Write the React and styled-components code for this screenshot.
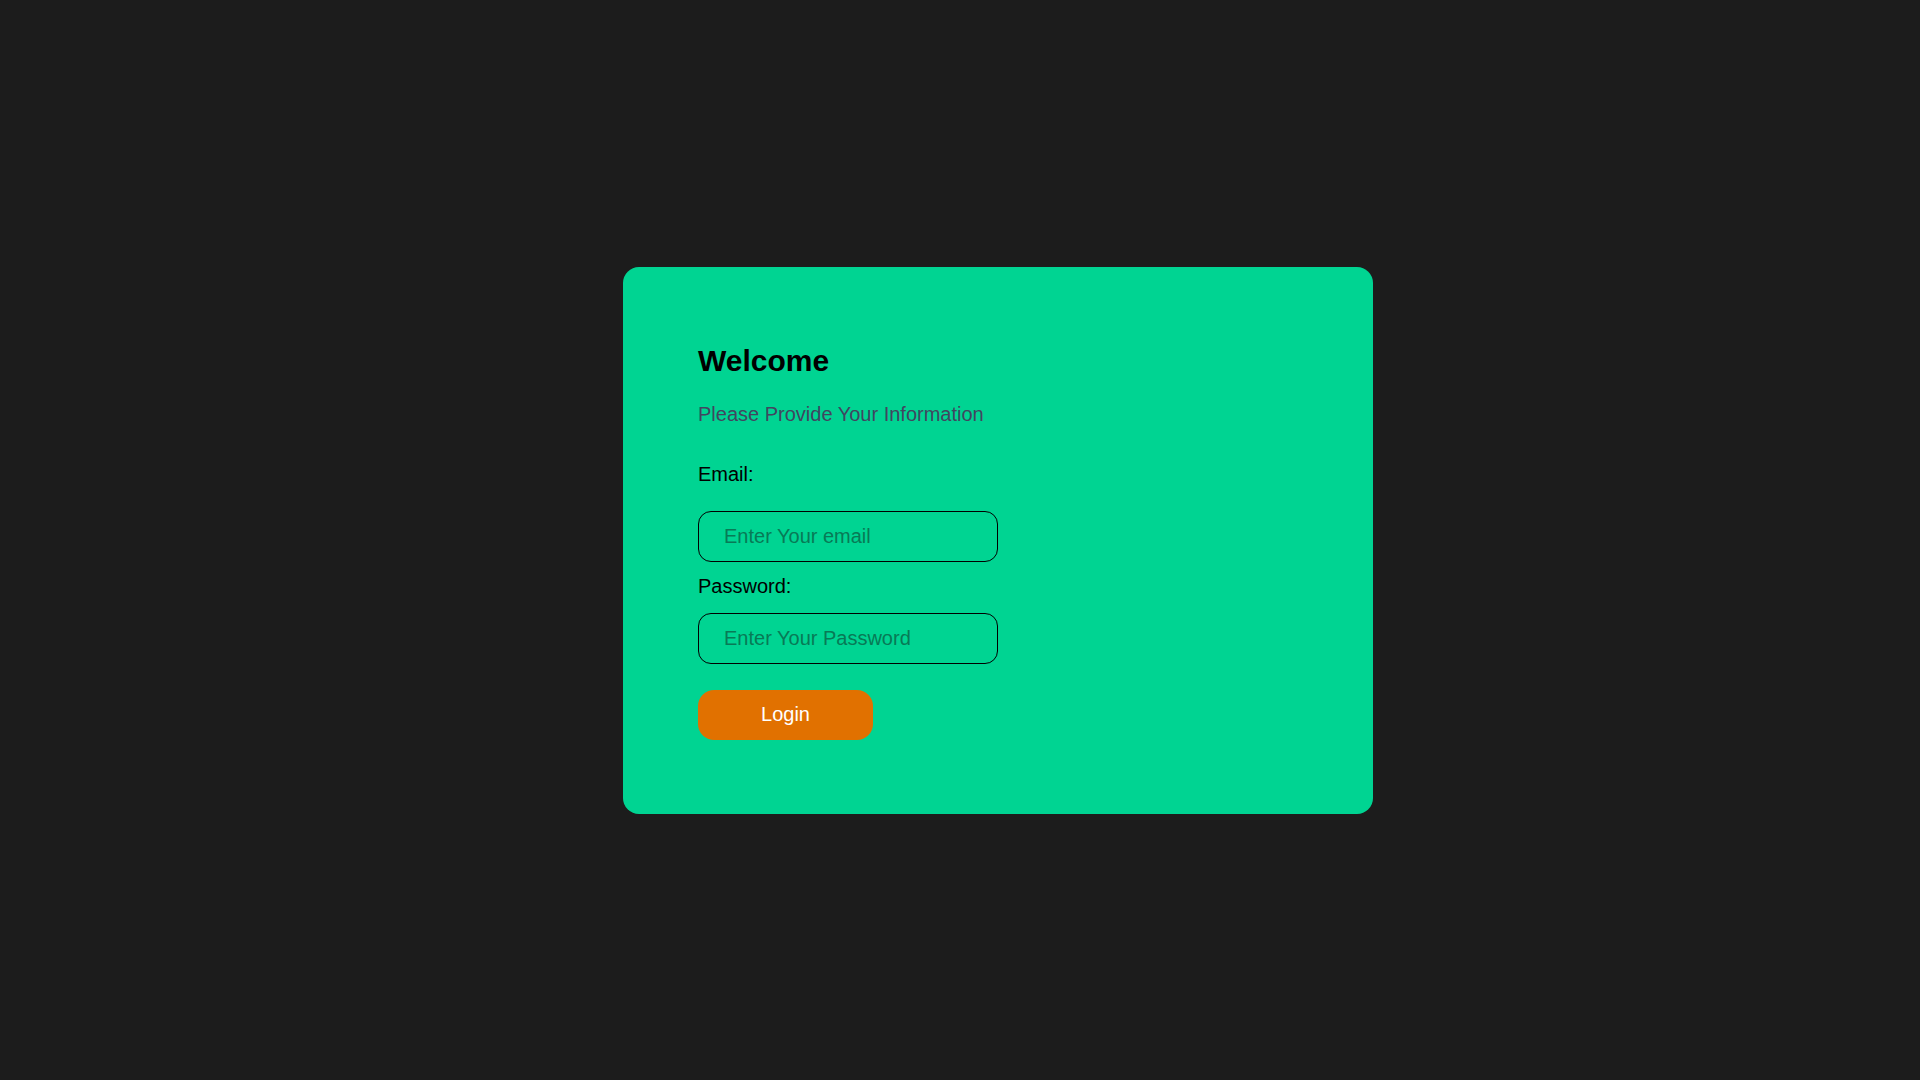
import React from "react";
import styled, { createGlobalStyle } from "styled-components";

const GlobalStyle = createGlobalStyle`
  html, body {
    margin: 0;
    padding: 0;
    background: #1c1c1c;
    font-family: "Liberation Sans", Arial, sans-serif;
  }
  * {
    box-sizing: border-box;
  }
`;

const Page = styled.main`
  display: flex;
  align-items: center;
  justify-content: center;
  min-height: 100vh;
  padding-left: 76px;
`;

const Card = styled.section`
  width: 750px;
  height: 547px;
  padding: 77px 75px 75px;
  background: #00d492;
  border-radius: 16px;
`;

const Title = styled.h2`
  margin: 0;
  font-size: 30px;
  font-weight: 700;
  line-height: 34px;
  color: #000;
`;

const Subtitle = styled.p`
  margin: 25px 0 0;
  font-size: 20px;
  line-height: 23px;
  color: #414660;
`;

const Form = styled.form`
  display: flex;
  flex-direction: column;
  align-items: flex-start;
  margin-top: 37px;
`;

const Label = styled.label`
  font-size: 20px;
  line-height: 23px;
  color: #000;
  margin-top: ${props => props.$top || 0}px;
`;

const Input = styled.input`
  width: 300px;
  height: 51px;
  margin-top: ${props => props.$top || 0}px;
  padding: 0 25px;
  border: 1px solid #000;
  border-radius: 13px;
  background: transparent;
  font-family: inherit;
  font-size: 20px;
  color: #000;
  outline: none;

  &::placeholder {
    color: #087a56;
  }
`;

const Button = styled.button`
  width: 175px;
  height: 50px;
  margin-top: 26px;
  border: 0;
  border-radius: 16px;
  background: #e17100;
  color: #fff;
  font-family: inherit;
  font-size: 20px;
  cursor: pointer;
`;

const App = () => (
  <>
    <GlobalStyle />
    <Page>
      <Card>
        <Title>Welcome</Title>
        <Subtitle>Please Provide Your Information</Subtitle>
        <Form onSubmit={e => e.preventDefault()}>
          <Label htmlFor="email">Email:</Label>
          <Input id="email" type="email" placeholder="Enter Your email" $top={25} />
          <Label htmlFor="password" $top={13}>Password:</Label>
          <Input id="password" type="password" placeholder="Enter Your Password" $top={15} />
          <Button type="submit">Login</Button>
        </Form>
      </Card>
    </Page>
  </>
);

export default App;
